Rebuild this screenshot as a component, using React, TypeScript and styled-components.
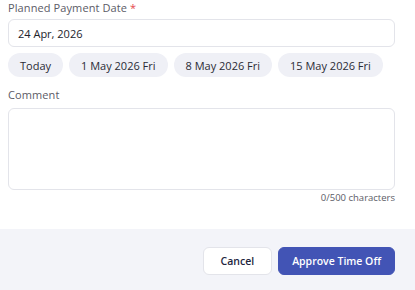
import * as React from 'react';
import styled, { createGlobalStyle } from 'styled-components';

const GlobalStyle = createGlobalStyle`
  html, body {
    margin: 0;
    padding: 0;
    background: #ffffff;
    font-family: "Open Sans", "Noto Sans", sans-serif;
  }
`;

const Page = styled.div`
  width: 415px;
  height: 290px;
  display: flex;
  flex-direction: column;
  overflow: hidden;
`;

const Body = styled.div`
  flex: 1;
  padding: 0 20px 0 8px;
  display: flex;
  flex-direction: column;
`;

const Label = styled.label<{ $top: number }>`
  margin-top: ${(p) => p.$top}px;
  font-size: 11px;
  line-height: 14px;
  color: #5b5b66;
  letter-spacing: 0.1px;
`;

const Required = styled.span`
  color: #e5484d;
  margin-left: 3px;
`;

const DateInput = styled.div`
  margin-top: 4px;
  height: 28px;
  box-sizing: border-box;
  border: 1px solid #e3e4ea;
  border-radius: 6px;
  display: flex;
  align-items: center;
  padding: 0 9px;
  font-size: 11px;
  font-weight: 500;
  color: #22232b;
`;

const ChipRow = styled.div`
  margin-top: 6px;
  display: flex;
  gap: 6px;
`;

const Chip = styled.button`
  height: 24px;
  padding: 0 12px;
  border: none;
  border-radius: 12px;
  background: #eff0f6;
  font-family: inherit;
  font-size: 11px;
  font-weight: 500;
  color: #2a2b35;
  cursor: pointer;
`;

const TextArea = styled.div`
  margin-top: 6px;
  height: 82px;
  box-sizing: border-box;
  border: 1px solid #e3e4ea;
  border-radius: 6px;
`;

const Counter = styled.div`
  margin-top: 2px;
  text-align: right;
  font-size: 9.5px;
  line-height: 12px;
  color: #5b5b66;
`;

const Footer = styled.div`
  height: 61px;
  box-sizing: border-box;
  background: #f3f4f9;
  display: flex;
  justify-content: flex-end;
  align-items: center;
  gap: 6px;
  padding: 3px 20px 0 0;
`;

const Button = styled.button<{ $primary?: boolean }>`
  height: 28px;
  padding: 0 ${(p) => (p.$primary ? 13 : 17)}px;
  border-radius: 6px;
  font-family: inherit;
  font-size: 10.5px;
  font-weight: 600;
  cursor: pointer;
  border: 1px solid ${(p) => (p.$primary ? '#4254b5' : '#e3e4ea')};
  background: ${(p) => (p.$primary ? '#4254b5' : '#ffffff')};
  color: ${(p) => (p.$primary ? '#ffffff' : '#1e2540')};
`;

const chips = ['Today', '1 May 2026 Fri', '8 May 2026 Fri', '15 May 2026 Fri'];

const App: React.FC = () => {
  return (
    <Page>
      <GlobalStyle />
      <Body>
        <Label $top={1}>
          Planned Payment Date<Required>*</Required>
        </Label>
        <DateInput>24 Apr, 2026</DateInput>
        <ChipRow>
          {chips.map((c) => (
            <Chip key={c}>{c}</Chip>
          ))}
        </ChipRow>
        <Label $top={11}>Comment</Label>
        <TextArea />
        <Counter>0/500 characters</Counter>
      </Body>
      <Footer>
        <Button>Cancel</Button>
        <Button $primary>Approve Time Off</Button>
      </Footer>
    </Page>
  );
};

export default App;
